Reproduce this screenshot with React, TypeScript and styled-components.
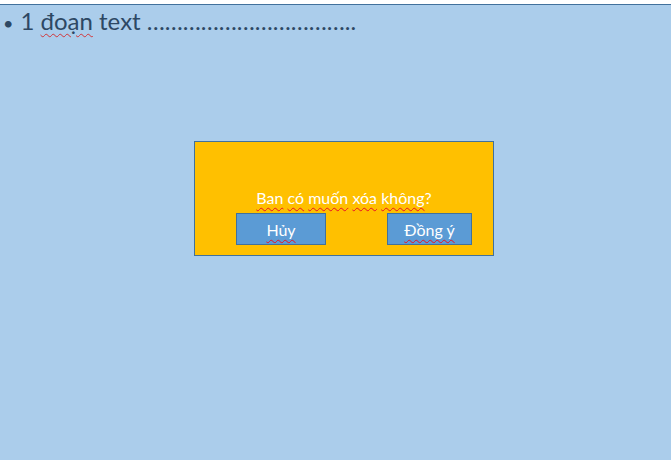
import React from "react";
import styled, { createGlobalStyle } from "styled-components";

const GlobalStyle = createGlobalStyle`
  html, body {
    margin: 0;
    padding: 0;
    background: #ffffff;
  }
  body {
    font-family: Lato, "Liberation Sans", sans-serif;
  }
`;

const Page = styled.div`
  width: 671px;
  height: 460px;
  padding-top: 4px;
  box-sizing: border-box;
  overflow: hidden;
`;

const Slide = styled.div`
  height: 456px;
  box-sizing: border-box;
  background: #abcdeb;
  border-top: 1px solid #41719c;
  display: flex;
  flex-direction: column;
`;

const Bullet = styled.div`
  display: flex;
  align-items: baseline;
  gap: 7px;
  height: 30px;
  padding: 1px 0 0 3px;
  color: #2d4864;
  font-size: 24px;
  line-height: 30px;
`;

const Dot = styled.span`
  font-size: 18px;
`;

const Misspelled = styled.span`
  text-decoration: underline wavy #d13438;
  text-decoration-thickness: 1px;
  text-underline-offset: 3px;
`;

const Dialog = styled.div`
  margin: 105px 0 0 194px;
  width: 300px;
  height: 115px;
  box-sizing: border-box;
  background: #ffc000;
  border: 1px solid #41719c;
  display: flex;
  flex-direction: column;
  justify-content: flex-end;
  padding-bottom: 10px;
`;

const Question = styled.div`
  color: #ffffff;
  font-size: 16px;
  text-align: center;
  line-height: 19px;
  margin-bottom: 6px;
`;

const Actions = styled.div`
  display: flex;
  justify-content: space-between;
  padding: 0 21px 0 41px;
`;

const Button = styled.button<{ $width: number }>`
  width: ${(p) => p.$width}px;
  height: 32px;
  box-sizing: border-box;
  background: #5b9bd5;
  border: 1px solid #41719c;
  color: #ffffff;
  font-family: Lato, "Liberation Sans", sans-serif;
  font-size: 16px;
  padding: 0;
`;

const Squiggle = styled.span`
  text-decoration: underline wavy #e81123;
  text-decoration-thickness: 1px;
  text-underline-offset: 3px;
`;

export default function App() {
  return (
    <Page>
      <GlobalStyle />
      <Slide>
        <Bullet>
          <Dot>•</Dot>
          <span>
            1 <Misspelled>đoạn</Misspelled> text ……………………………..
          </span>
        </Bullet>
        <Dialog>
          <Question>
            <Squiggle>Ban</Squiggle> <Squiggle>có</Squiggle>{" "}
            <Squiggle>muốn</Squiggle> <Squiggle>xóa</Squiggle>{" "}
            <Squiggle>không</Squiggle>?
          </Question>
          <Actions>
            <Button $width={90}>
              <Squiggle>Hủy</Squiggle>
            </Button>
            <Button $width={85}>
              <Squiggle>Đồng ý</Squiggle>
            </Button>
          </Actions>
        </Dialog>
      </Slide>
    </Page>
  );
}
